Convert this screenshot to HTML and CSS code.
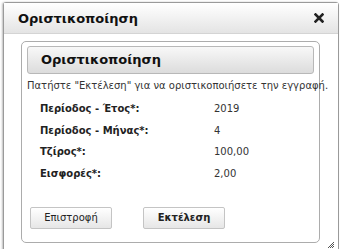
FILE: index.html
```html
<!DOCTYPE html>
<html>
<head>
<meta charset="utf-8">
<link rel="stylesheet" href="styles.css">
</head>
<body>
<div class="dialog">
  <div class="titlebar">
    <span class="title">Οριστικοποίηση</span>
    <svg class="close" width="10" height="10" viewBox="0 0 10 10"><path d="M1.5 1.5 L8.5 8.5 M8.5 1.5 L1.5 8.5" stroke="#222" stroke-width="2.6" stroke-linecap="square"/></svg>
  </div>
  <div class="body">
    <div class="panel">
      <div class="panel-head">Οριστικοποίηση</div>
      <p class="desc">Πατήστε "Εκτέλεση" για να οριστικοποιήσετε την εγγραφή.</p>
      <div class="fields">
        <div class="label">Περίοδος - Έτος*:</div><div class="value">2019</div>
        <div class="label">Περίοδος - Μήνας*:</div><div class="value">4</div>
        <div class="label">Τζίρος*:</div><div class="value">100,00</div>
        <div class="label">Εισφορές*:</div><div class="value">2,00</div>
      </div>
      <div class="buttons">
        <button class="btn">Επιστροφή</button>
        <button class="btn btn-primary">Εκτέλεση</button>
      </div>
    </div>
    <svg class="grip" width="8" height="8" viewBox="0 0 8 8"><path d="M7 1 L1 7 M7 3 L3 7 M7 5 L5 7" stroke="#555" stroke-width="1"/></svg>
  </div>
</div>
</body>
</html>
```
FILE: styles.css
```css
html, body { margin: 0; padding: 0; background: #fff; }
body { font-family: Tahoma, "DejaVu Sans", sans-serif; font-size: 11px; color: #222; width: 343px; height: 249px; overflow: hidden; padding: 2px 0 0 3px; box-sizing: border-box; }
.dialog {
  width: 336px; height: 252px; box-sizing: border-box;
  border: 1px solid #9a9a9a; border-radius: 3px; background: #fff;
  box-shadow: -1px 0 2px rgba(0,0,0,0.25);
}
.titlebar {
  height: 30px; display: flex; align-items: center; justify-content: space-between;
  padding: 0 14px 0 14px;
  background: linear-gradient(#ffffff, #e4e4e4);
  border-bottom: 1px solid #d4d4d4;
}
.title { font-weight: bold; font-size: 13px; color: #111; }
.close { display: block; }
.body { position: relative; padding: 7px 18px 0 17px; height: 214px; }
.panel {
  border: 1px solid #acacac; border-radius: 5px; height: 196px;
  padding: 4px 5px 0 5px;
}
.panel-head {
  height: 26px; line-height: 26px; padding-left: 13px;
  font-weight: bold; font-size: 13px; color: #111;
  border: 1px solid #b8b8b8; border-radius: 3px;
  background: linear-gradient(#f8f8f8, #dcdcdc);
}
.desc { margin: 6px 0 0 0; font-size: 10px; color: #333; white-space: nowrap; }
.fields {
  display: grid; grid-template-columns: 174px auto;
  margin: 7px 0 0 13px;
}
.label, .value { height: 21.7px; line-height: 21.7px; font-size: 10px; }
.label { font-weight: bold; color: #222; }
.value { color: #333; }
.buttons { display: flex; gap: 31px; margin: 22px 0 0 3px; }
.btn {
  width: 82px; height: 22px; padding: 0; font-family: inherit; font-size: 10px; color: #222;
  border: 1px solid #c4c4c4; border-radius: 2px;
  background: linear-gradient(#ffffff, #e6e6e6);
}
.btn-primary { font-weight: bold; }
.grip { position: absolute; right: 3px; bottom: 6px; display: block; }
```
